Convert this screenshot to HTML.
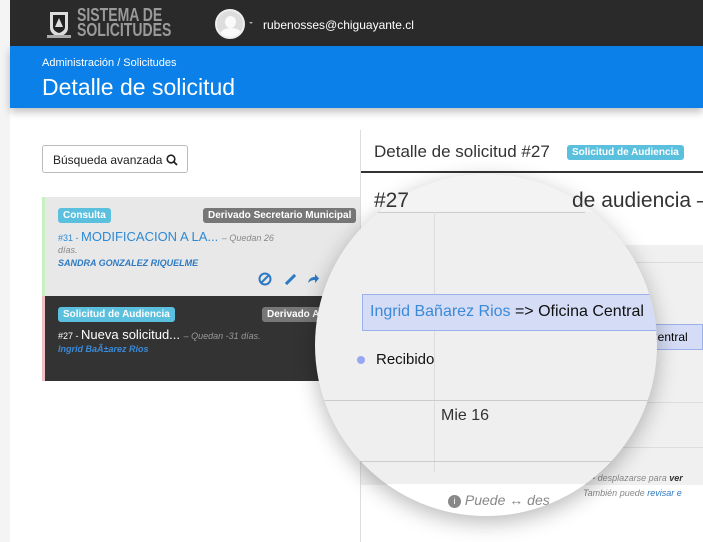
<!DOCTYPE html>
<html><head><meta charset="utf-8"><style>
*{margin:0;padding:0;box-sizing:border-box}
body{width:703px;height:542px;overflow:hidden;background:#fff;font-family:"Liberation Sans",sans-serif;position:relative}
.a{position:absolute;white-space:nowrap}
.lbl{position:absolute;font-size:10px;font-weight:bold;color:#fff;padding:2px 5px;border-radius:3px;line-height:11px;white-space:nowrap}
</style></head><body>
<div class="a" style="left:0;top:0;width:10px;height:542px;background:#f4f4f4"></div>
<div class="a" style="left:10px;top:0;width:693px;height:46px;background:#2a2a2a"></div>
<svg class="a" style="left:46px;top:9px" width="26" height="32" viewBox="0 0 26 32"><path d="M4 3h18v16c0 5-5 8-9 9-4-1-9-4-9-9z" fill="#ddd"/><path d="M7 6h12v12c0 3-3 5-6 6-3-1-6-3-6-6z" fill="#222"/><path d="M9 18l4-9 4 9z" fill="#ddd"/><rect x="1" y="26" width="24" height="3" fill="#aaa"/></svg>
<div class="a" style="left:77px;top:8px;color:#9a9a9a;font-size:18px;line-height:15px;font-weight:bold;transform:scaleX(.78);transform-origin:left">SISTEMA DE<br>SOLICITUDES</div>
<div class="a" style="left:215px;top:9px;width:30px;height:30px;border-radius:50%;background:#ddd;border:2px solid #eee;overflow:hidden"><div class="a" style="left:8px;top:5px;width:11px;height:12px;border-radius:50%;background:#fafafa"></div><div class="a" style="left:3px;top:17px;width:22px;height:14px;border-radius:50%;background:#fafafa"></div></div>
<div class="a" style="left:249px;top:22px;width:0;height:0;border-left:2px solid transparent;border-right:2px solid transparent;border-top:2px solid #aaa"></div>
<div class="a" style="left:263px;top:18px;color:#fff;font-size:12px">rubenosses@chiguayante.cl</div>
<div class="a" style="left:10px;top:46px;width:693px;height:62px;background:#0a80e8;box-shadow:0 4px 8px rgba(0,0,0,.25)"></div>
<div class="a" style="left:42px;top:57px;color:#fff;font-size:11px">Administración / Solicitudes</div>
<div class="a" style="left:42px;top:74px;color:#fff;font-size:23px">Detalle de solicitud</div>

<div class="a" style="left:42px;top:145px;width:146px;height:28px;border:1px solid #bbb;border-radius:3px;font-size:12px;padding:7px 0 0 10px;color:#222">Búsqueda avanzada <svg width="12" height="12" viewBox="0 0 12 12" style="vertical-align:-2px"><circle cx="5" cy="5" r="3.8" stroke="#222" stroke-width="1.6" fill="none"/><path d="M8 8l3 3" stroke="#222" stroke-width="1.8"/></svg></div>

<div class="a" style="left:42px;top:197px;width:318px;height:99px;background:#e8e8e8;border-left:3px solid #c9f0c0"></div>
<span class="lbl" style="left:58px;top:208px;background:#5bc0de">Consulta</span>
<span class="lbl" style="left:203px;top:208px;background:#777">Derivado Secretario Municipal</span>
<div class="a" style="left:58px;top:229px;font-size:13px;color:#2d8ad4"><span style="font-size:9px">#31 - </span>MODIFICACION A LA... <i style="font-size:9px;color:#888">– Quedan 26</i></div>
<div class="a" style="left:58px;top:245px;font-size:9px;color:#888;font-style:italic">días.</div>
<div class="a" style="left:58px;top:258px;font-size:9px;color:#2d7ac4;font-style:italic;font-weight:bold">SANDRA GONZALEZ RIQUELME</div>
<svg class="a" style="left:258px;top:272px" width="14" height="14" viewBox="0 0 14 14"><circle cx="7" cy="7" r="5.5" stroke="#2d7ac4" stroke-width="2" fill="none"/><path d="M3 11L11 3" stroke="#2d7ac4" stroke-width="2"/></svg>
<div class="a" style="left:284px;top:278px;width:13px;height:3px;background:#2d7ac4;transform:rotate(-45deg)"></div>
<svg class="a" style="left:307px;top:273px" width="13" height="11" viewBox="0 0 13 11"><path d="M1 10C2 5 5 4 8 4V1l4 4.5L8 10V7C5 7 3 8 1 10z" fill="#2d7ac4"/></svg>
<div class="a" style="left:42px;top:296px;width:318px;height:85px;background:#333;border-left:3px solid #f0c0c0"></div>
<span class="lbl" style="left:58px;top:307px;background:#5bc0de">Solicitud de Audiencia</span>
<span class="lbl" style="left:262px;top:307px;background:#777">Derivado A</span>
<div class="a" style="left:58px;top:327px;font-size:13px;color:#fff"><span style="font-size:9px">#27 - </span>Nueva solicitud... <i style="font-size:9px;color:#999">– Quedan -31 días.</i></div>
<div class="a" style="left:58px;top:344px;font-size:9px;color:#3a8ad8;font-style:italic;font-weight:bold">Ingrid BaÃ±arez Rios</div>

<div class="a" style="left:360px;top:130px;width:1px;height:412px;background:#ddd"></div>
<div class="a" style="left:374px;top:142px;font-size:17px;color:#333">Detalle de solicitud #27</div>
<span class="lbl" style="left:567px;top:145px;background:#5bc0de">Solicitud de Audiencia</span>
<div class="a" style="left:361px;top:171px;width:342px;height:2px;background:#333"></div>
<div class="a" style="left:374px;top:189px;font-size:21px;color:#333">#27</div>
<div class="a" style="left:572px;top:189px;font-size:21px;color:#333">de audiencia –</div>
<div class="a" style="left:361px;top:245px;width:342px;height:240px;background:#f0f0f0"></div>
<div class="a" style="left:361px;top:262px;width:342px;height:1px;background:#ddd"></div>
<div class="a" style="left:620px;top:324px;width:83px;height:26px;background:#d5dcf5;border:1px solid #9db0ec;font-size:12px;padding:5px 0 0 28px">Central</div>
<div class="a" style="left:361px;top:402px;width:342px;height:1px;background:#ddd"></div>
<div class="a" style="left:361px;top:447px;width:342px;height:1px;background:#ddd"></div>
<div class="a" style="left:592px;top:473px;font-size:9px;color:#888;font-style:italic">• desplazarse para <b style="color:#333">ver</b></div>
<div class="a" style="left:583px;top:488px;font-size:9px;color:#888;font-style:italic">También puede <span style="color:#2d7ac4">revisar e</span></div>

<div class="a" style="left:315px;top:174px;width:342px;height:342px;border-radius:50%;background:#efefef;overflow:hidden;box-shadow:0 6px 22px rgba(0,0,0,.28)">
 <div class="a" style="left:0;top:0;width:342px;height:38px;background:#f3f3f3"></div>
 <div class="a" style="left:59px;top:15px;font-size:21px;color:#333">#27</div>
 <div class="a" style="left:257px;top:15px;font-size:21px;color:#333">de audiencia</div>
 <div class="a" style="left:0;top:38px;width:270px;height:1px;background:#ccc"></div>
 <div class="a" style="left:119px;top:38px;width:1px;height:260px;background:#ddd"></div>
 <div class="a" style="left:47px;top:120px;width:300px;height:37px;background:#d5dcf5;border:1px solid #9db0ec;font-size:16px;padding:8px 0 0 7px;color:#111"><span style="color:#3a8ad8">Ingrid Bañarez Rios</span> =&gt; Oficina Central</div>
 <div class="a" style="left:42px;top:182px;width:8px;height:8px;border-radius:50%;background:#98a8f0"></div>
 <div class="a" style="left:61px;top:177px;font-size:15px;color:#111">Recibido</div>
 <div class="a" style="left:0;top:226px;width:342px;height:1px;background:#ccc"></div>
 <div class="a" style="left:126px;top:233px;font-size:16px;color:#333">Mie 16</div>
 <div class="a" style="left:0;top:287px;width:342px;height:1px;background:#ccc"></div>
 <div class="a" style="left:0;top:310px;width:342px;height:40px;background:#fff"></div>
 <div class="a" style="left:133px;top:318px;font-size:14px;color:#888;font-style:italic"><span style="display:inline-block;width:13px;height:13px;border-radius:50%;background:#888;color:#fff;font-size:9px;text-align:center;font-style:normal;vertical-align:1px;line-height:13px">i</span> Puede ↔ des</div>
</div>
</body></html>
